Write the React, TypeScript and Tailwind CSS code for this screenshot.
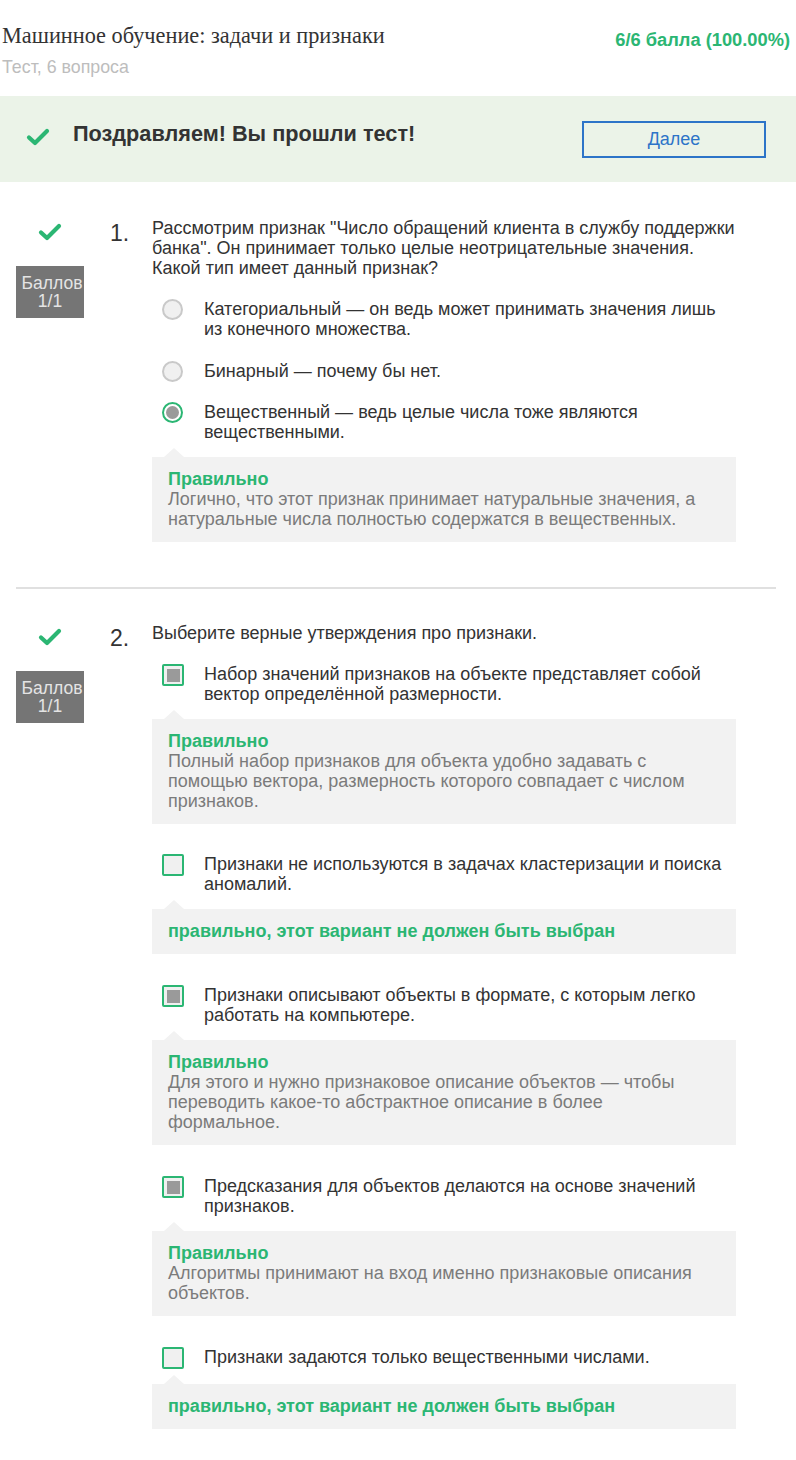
import React from "react";

const GREEN = "#2bb673";

// галочка (зелёная)
function CheckMark({ className = "" }: { className?: string }) {
  return (
    <svg viewBox="0 0 24 18" className={className} fill="none">
      <path d="M3 9.5 L9 15 L21 3" stroke={GREEN} strokeWidth="4.2" strokeLinecap="round" strokeLinejoin="round" />
    </svg>
  );
}

function ScoreBadge() {
  return (
    <div className="ml-[16px] mt-[25px] w-[68px] h-[52px] bg-[#757575] text-[#e4e4e4] text-[17.5px] leading-[18px] flex flex-col items-center justify-center">
      <span className="whitespace-nowrap pl-[4px]">Баллов</span>
      <span>1/1</span>
    </div>
  );
}

function Radio({ checked }: { checked?: boolean }) {
  if (checked) {
    return (
      <div className="w-[21px] h-[21px] rounded-full border-2 border-[#2bb673] bg-white flex items-center justify-center">
        <div className="w-[13px] h-[13px] rounded-full bg-[#9a9a9a]" />
      </div>
    );
  }
  return <div className="w-[21px] h-[21px] rounded-full border-2 border-[#c9c9c9] bg-[#f0f0f0]" />;
}

function Checkbox({ checked }: { checked?: boolean }) {
  return (
    <div className="w-[22px] h-[22px] rounded-[2px] border-2 border-[#2bb673] bg-[#f0f0f0] flex items-center justify-center">
      {checked && <div className="w-[13px] h-[13px] bg-[#9a9a9a]" />}
    </div>
  );
}

function Feedback({ title, lines }: { title: string; lines?: string[] }) {
  return (
    <div className="relative mt-[15px] bg-[#f2f2f2] pl-[16px] pr-[16px] pt-[12px] pb-[13px] text-[18px] leading-[20px]">
      {/* уголок */}
      <div className="absolute left-[12px] top-[-9px] w-0 h-0 border-l-[10px] border-r-[10px] border-b-[9px] border-l-transparent border-r-transparent border-b-[#f2f2f2]" />
      <div className="font-bold text-[#2bb673] whitespace-nowrap">{title}</div>
      {lines?.map((l, i) => (
        <div key={i} className="text-[#7b7b7b] whitespace-nowrap">{l}</div>
      ))}
    </div>
  );
}

function Option({ lines, control }: { lines: string[]; control: React.ReactNode }) {
  return (
    <div className="flex">
      <div className="w-[52px] flex-none pl-[10px]">{control}</div>
      <div className="text-[18px] leading-[20px] text-[#333]">
        {lines.map((l, i) => (
          <div key={i} className="whitespace-nowrap">{l}</div>
        ))}
      </div>
    </div>
  );
}

function QuestionRow({ num, children }: { num: string; children: React.ReactNode }) {
  return (
    <div className="flex">
      <div className="w-[110px] flex-none">
        <div className="ml-[38px] mt-[5px] w-[24px] h-[18px]">
          <CheckMark className="w-[24px] h-[18px]" />
        </div>
        <ScoreBadge />
      </div>
      <div className="w-[42px] flex-none text-[23px] leading-[24px] text-[#333] mt-[3px]">{num}</div>
      <div className="w-[584px] flex-none">{children}</div>
    </div>
  );
}

export default function App() {
  return (
    <div className="w-[796px] min-h-[1460px] bg-white font-['Liberation_Sans',Arial,sans-serif] text-[#333]">
      {/* шапка */}
      <div className="flex justify-between pl-[2px] pr-[6px] pt-[23px]">
        <div>
          <div className="font-['Liberation_Serif',serif] text-[22.3px] leading-[26px] text-[#333]">
            Машинное обучение: задачи и признаки
          </div>
          <div className="mt-[8px] text-[17.8px] leading-[20px] text-[#bdbdbd]">Тест, 6 вопроса</div>
        </div>
        <div className="pt-[6px] text-[18.3px] leading-[22px] font-bold text-[#2bb673]">6/6 балла (100.00%)</div>
      </div>

      {/* баннер */}
      <div className="mt-[19px] h-[86px] bg-[#ebf3e8] flex items-center pr-[30px]">
        <CheckMark className="ml-[26px] mr-[23px] w-[24px] h-[18px] -mt-[4px]" />
        <div className="flex-1 text-[21.7px] font-bold text-[#333] -mt-[9px]">Поздравляем! Вы прошли тест!</div>
        <button className="w-[184px] h-[37px] border-2 border-[#2d74c8] text-[#2d74c8] text-[18px] bg-transparent">
          Далее
        </button>
      </div>

      {/* вопрос 1 */}
      <div className="mt-[36px]">
        <QuestionRow num="1.">
          <div className="text-[18px] leading-[20px]">
            <div className="whitespace-nowrap">Рассмотрим признак "Число обращений клиента в службу поддержки</div>
            <div className="whitespace-nowrap">банка". Он принимает только целые неотрицательные значения.</div>
            <div className="whitespace-nowrap">Какой тип имеет данный признак?</div>
          </div>
          <div className="mt-[21px]">
            <Option control={<Radio />} lines={["Категориальный — он ведь может принимать значения лишь", "из конечного множества."]} />
          </div>
          <div className="mt-[22px]">
            <Option control={<Radio />} lines={["Бинарный — почему бы нет."]} />
          </div>
          <div className="mt-[20px]">
            <Option control={<Radio checked />} lines={["Вещественный — ведь целые числа тоже являются", "вещественными."]} />
          </div>
          <Feedback
            title="Правильно"
            lines={[
              "Логично, что этот признак принимает натуральные значения, а",
              "натуральные числа полностью содержатся в вещественных.",
            ]}
          />
        </QuestionRow>
      </div>

      <div className="mt-[45px] mx-[16px] w-[760px] h-[2px] bg-[#e0e0e0]" />

      {/* вопрос 2 */}
      <div className="mt-[34px]">
        <QuestionRow num="2.">
          <div className="text-[18px] leading-[20px] whitespace-nowrap">Выберите верные утверждения про признаки.</div>
          <div className="mt-[21px]">
            <Option control={<Checkbox checked />} lines={["Набор значений признаков на объекте представляет собой", "вектор определённой размерности."]} />
          </div>
          <Feedback
            title="Правильно"
            lines={[
              "Полный набор признаков для объекта удобно задавать с",
              "помощью вектора, размерность которого совпадает с числом",
              "признаков.",
            ]}
          />
          <div className="mt-[30px]">
            <Option control={<Checkbox />} lines={["Признаки не используются в задачах кластеризации и поиска", "аномалий."]} />
          </div>
          <Feedback title="правильно, этот вариант не должен быть выбран" />
          <div className="mt-[31px]">
            <Option control={<Checkbox checked />} lines={["Признаки описывают объекты в формате, с которым легко", "работать на компьютере."]} />
          </div>
          <Feedback
            title="Правильно"
            lines={[
              "Для этого и нужно признаковое описание объектов — чтобы",
              "переводить какое-то абстрактное описание в более",
              "формальное.",
            ]}
          />
          <div className="mt-[31px]">
            <Option control={<Checkbox checked />} lines={["Предсказания для объектов делаются на основе значений", "признаков."]} />
          </div>
          <Feedback
            title="Правильно"
            lines={["Алгоритмы принимают на вход именно признаковые описания", "объектов."]}
          />
          <div className="mt-[31px]">
            <Option control={<Checkbox />} lines={["Признаки задаются только вещественными числами."]} />
          </div>
          <Feedback title="правильно, этот вариант не должен быть выбран" />
        </QuestionRow>
      </div>
    </div>
  );
}
